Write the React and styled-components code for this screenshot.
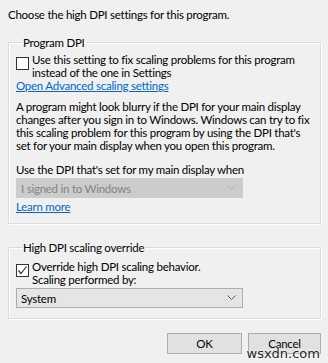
import React from 'react'
import styled, { createGlobalStyle } from 'styled-components';

const GlobalStyle = createGlobalStyle`
    html, body {
        margin: 0;
        padding: 0;
        background: #f0f0f0;
    }
`;

const Page = styled.div`
    position: relative;
    width: 328px;
    height: 363px;
    box-sizing: border-box;
    padding: 8px 7px 0 8px;
    background: #f0f0f0;
    color: #000;
    font-family: "Segoe UI", Lato, "Liberation Sans", sans-serif;
    font-size: 11.5px;
    letter-spacing: -0.25px;
    line-height: 13px;
    white-space: nowrap;
    overflow: hidden;
`;

const Heading = styled.div`
    margin: 0 0 15px 0;
`;

const Group = styled.fieldset`
    margin: 0 0 ${({ $gap }) => $gap}px 0;
    padding: ${({ $pad }) => $pad};
    border: 1px solid #dcdcdc;
    box-shadow: inset 1px 1px 0 #fff, 1px 1px 0 #fff;
    min-width: 0;
    display: flex;
    flex-direction: column;
    align-items: flex-start;
`;

const Legend = styled.legend`
    padding: 0 1px;
    margin-left: 6px;
    line-height: 13px;
`;

const CheckRow = styled.label`
    display: flex;
    align-items: flex-start;
    gap: 3px;
`;

const Box = styled.span`
    flex: 0 0 auto;
    width: 11px;
    height: 11px;
    margin-top: 4px;
    border: 1px solid #333;
    background: #fff;
    display: flex;
    align-items: center;
    justify-content: center;
`;

const Link = styled.span`
    color: #0066cc;
    text-decoration: underline;
    text-underline-offset: 1px;
    margin-top: ${({ $top }) => $top || 0}px;
`;

const Text = styled.div`
    margin-top: ${({ $top }) => $top || 0}px;
`;

const Combo = styled.div`
    box-sizing: border-box;
    width: 227px;
    height: 20px;
    margin-top: ${({ $top }) => $top || 0}px;
    padding: 0 6px 0 4px;
    display: flex;
    align-items: center;
    justify-content: space-between;
    border: 1px solid ${({ $disabled }) => ($disabled ? '#cccccc' : '#adadad')};
    background: ${({ $disabled }) => ($disabled ? '#cccccc' : '#e5e5e5')};
    color: ${({ $disabled }) => ($disabled ? '#838383' : '#000')};
`;

const Chevron = ({ color }) => (
    <svg width="9" height="6" viewBox="0 0 9 6">
        <path d="M0.5 0.5 L4.5 4.5 L8.5 0.5" fill="none" stroke={color} strokeWidth="1" />
    </svg>
);

const Buttons = styled.div`
    display: flex;
    justify-content: flex-end;
    gap: 6px;
`;

const Button = styled.div`
    box-sizing: border-box;
    width: ${({ $w }) => $w}px;
    height: 21px;
    border: 1px solid #adadad;
    background: #e1e1e1;
    display: flex;
    align-items: center;
    justify-content: center;
`;

const Watermark = styled.div`
    position: absolute;
    right: 8px;
    bottom: 2px;
    font-family: "DejaVu Sans", sans-serif;
    font-size: 13px;
    line-height: 14px;
    letter-spacing: 0;
    color: #222;
    text-shadow: 0 0 2px #fff, 0 0 2px #fff;
`;

const App = () => {
    return (
        <Page>
            <GlobalStyle />
            <Heading>Choose the high DPI settings for this program.</Heading>

            <Group $gap={17} $pad="4px 8px 10px 7px">
                <Legend>Program DPI</Legend>
                <CheckRow>
                    <Box />
                    <span>
                        Use this setting to fix scaling problems for this program<br />
                        instead of the one in Settings
                    </span>
                </CheckRow>
                <Link>Open Advanced scaling settings</Link>
                <Text $top={8}>
                    A program might look blurry if the DPI for your main display<br />
                    changes after you sign in to Windows. Windows can try to fix<br />
                    this scaling problem for this program by using the DPI that's<br />
                    set for your main display when you open this program.
                </Text>
                <Text $top={11}>Use the DPI that's set for my main display when</Text>
                <Combo $top={2} $disabled>
                    <span>I signed in to Windows</span>
                    <Chevron color="#a8a8a8" />
                </Combo>
                <Link $top={2}>Learn more</Link>
            </Group>

            <Group $gap={14} $pad="6px 8px 10px 7px">
                <Legend>High DPI scaling override</Legend>
                <CheckRow>
                    <Box>
                        <svg width="11" height="11" viewBox="0 0 11 11">
                            <path d="M1.5 5.5 L4 8.5 L9.5 1.5" fill="none" stroke="#333" strokeWidth="1.2" />
                        </svg>
                    </Box>
                    <span>
                        Override high DPI scaling behavior.<br />
                        Scaling performed by:
                    </span>
                </CheckRow>
                <Combo $top={2}>
                    <span>System</span>
                    <Chevron color="#555" />
                </Combo>
            </Group>

            <Buttons>
                <Button $w={75}>OK</Button>
                <Button $w={73}>Cancel</Button>
            </Buttons>
            <Watermark>wsxdn.com</Watermark>
        </Page>
    );
};

export default App;
